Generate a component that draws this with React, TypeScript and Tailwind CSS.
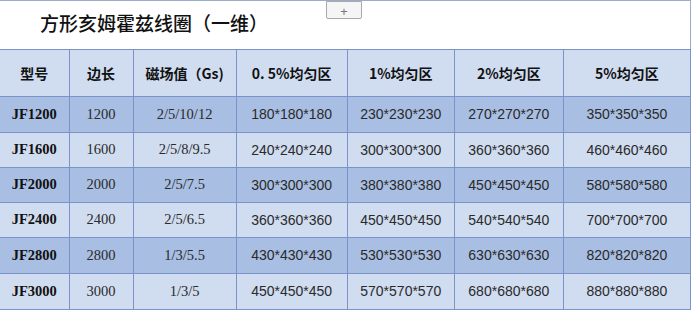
import React from "react";

const head = ["型号", "边长", "磁场值（Gs)", "0. 5%均匀区", "1%均匀区", "2%均匀区", "5%均匀区"];
const widths = ["w-[69px]", "w-[64px]", "w-[103px]", "w-[111px]", "w-[107px]", "w-[109px]", "w-[127px]"];

const rows = [
  ["JF1200", "1200", "2/5/10/12", "180*180*180", "230*230*230", "270*270*270", "350*350*350"],
  ["JF1600", "1600", "2/5/8/9.5", "240*240*240", "300*300*300", "360*360*360", "460*460*460"],
  ["JF2000", "2000", "2/5/7.5", "300*300*300", "380*380*380", "450*450*450", "580*580*580"],
  ["JF2400", "2400", "2/5/6.5", "360*360*360", "450*450*450", "540*540*540", "700*700*700"],
  ["JF2800", "2800", "1/3/5.5", "430*430*430", "530*530*530", "630*630*630", "820*820*820"],
  ["JF3000", "3000", "1/3/5", "450*450*450", "570*570*570", "680*680*680", "880*880*880"],
];

const heights = ["h-[36px]", "h-[35px]", "h-[35px]", "h-[35px]", "h-[36px]", "h-[36px]"];

export default function App() {
  return (
    <div className="w-[691px] h-[312px] bg-white overflow-hidden">
      {/* title strip */}
      <div className="relative h-[49px] border-t border-r border-[#9aaccb] flex items-center pl-[40px]">
        <h1
          className="text-[19px] font-medium text-[#111] pb-[3px]"
          style={{ fontFamily: '"Noto Sans CJK SC", sans-serif' }}
        >
          方形亥姆霍兹线圈（一维）
        </h1>
        <button className="absolute left-[326px] top-0 w-[36px] h-[18px] bg-[#f5f5f5] border border-[#a9a9a9] rounded-b-[2px] flex items-center justify-center pt-[2px] text-[#777] text-[13px] leading-none">
          +
        </button>
      </div>

      <table className="table-fixed border-collapse w-[691px]">
        <colgroup>
          {widths.map((w, i) => (
            <col key={i} className={w} />
          ))}
        </colgroup>
        <thead>
          <tr className="h-[47px] bg-[#d0dcf0]">
            {head.map((h, i) => (
              <th
                key={i}
                className={`border border-[#7b93c9] text-[14px] font-bold text-[#111] text-center ${i === 0 ? "border-l-0" : ""}`}
                style={{ fontFamily: '"Noto Sans CJK SC", sans-serif' }}
              >
                {h}
              </th>
            ))}
          </tr>
        </thead>
        <tbody>
          {rows.map((r, ri) => (
            <tr key={ri} className={`${heights[ri]} ${ri % 2 === 0 ? "bg-[#a8bee2]" : "bg-[#d0dcf0]"}`}>
              {r.map((c, ci) => (
                <td
                  key={ci}
                  className={`border border-[#7b93c9] text-center p-0 ${ci === 0 ? "border-l-0 font-bold text-[14.5px] text-[#111]" : "text-[#2a2a2a]"} ${ci < 3 && ci > 0 ? "text-[14.5px]" : ""} ${ci >= 3 ? "text-[14px]" : ""}`}
                  style={{
                    fontFamily: ci < 3 ? '"Liberation Serif", serif' : '"Liberation Sans", sans-serif',
                  }}
                >
                  {c}
                </td>
              ))}
            </tr>
          ))}
        </tbody>
      </table>
    </div>
  );
}
